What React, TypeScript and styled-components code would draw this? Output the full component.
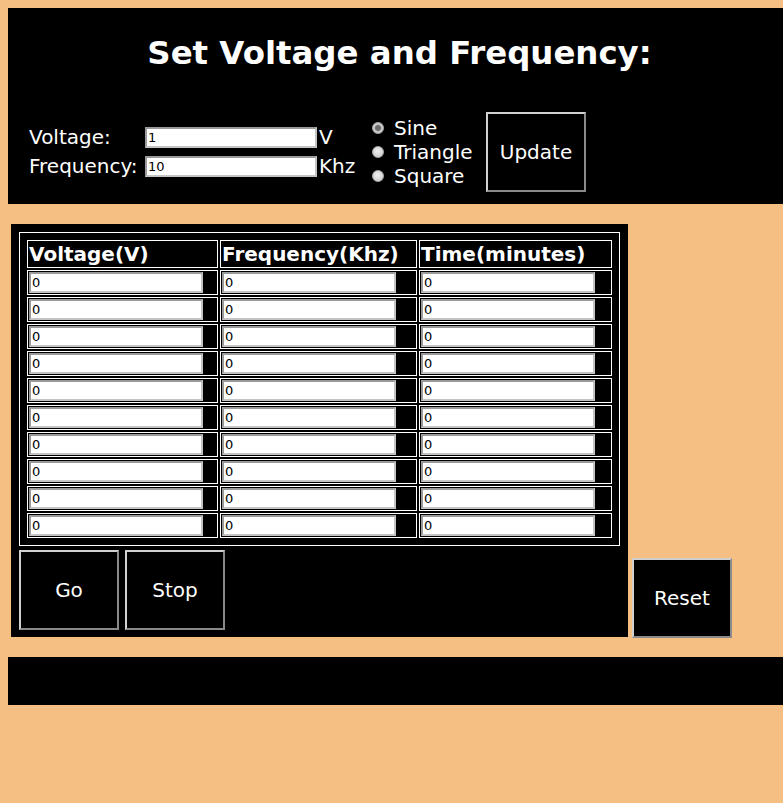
import React from "react";
import styled, { createGlobalStyle } from "styled-components";

const Global = createGlobalStyle`
  body {
    margin: 8px 0 8px 8px;
    background: #f5be82;
    font-family: "DejaVu Sans", "Liberation Sans", sans-serif;
    color: #fff;
  }
`;

const Header = styled.header`
  background: #000;
  display: flex;
  flex-direction: column;
  padding: 27px 0 12px 21px;
`;

const Title = styled.h1`
  margin: 0 -8px 40px -21px;
  font-size: 32.4px;
  line-height: 37px;
  font-weight: bold;
  text-align: center;
  white-space: nowrap;
  color: #fff;
`;

const Controls = styled.div`
  display: flex;
  align-items: center;
  height: 80px;
`;

const FieldGrid = styled.div`
  display: grid;
  grid-template-columns: 112px 172px 36px;
  grid-auto-rows: 23px;
  row-gap: 6px;
  column-gap: 4px;
  align-items: center;
  font-size: 20px;
  line-height: 23px;
  white-space: nowrap;
`;

const Unit = styled.span`
  margin-left: -2px;
`;

const TextBox = styled.input<{ $w: number }>`
  box-sizing: border-box;
  width: ${(p) => p.$w}px;
  height: 21px;
  margin: 0;
  padding: 0 1px;
  border-width: 2px;
  border-style: solid;
  border-color: #9a9a9a #c4c4c4 #c4c4c4 #9a9a9a;
  background: #fff;
  color: #000;
  font-family: "DejaVu Sans", sans-serif;
  font-size: 13px;
  outline: none;
`;

const RadioGroup = styled.div`
  display: flex;
  flex-direction: column;
  width: 104px;
  margin-left: 15px;
  font-size: 20px;
  line-height: 24px;
  white-space: nowrap;
`;

const RadioLabel = styled.label`
  display: flex;
  align-items: center;
  gap: 10px;
`;

const Radio = styled.input`
  appearance: none;
  -webkit-appearance: none;
  margin: 0;
  width: 12px;
  height: 12px;
  border-radius: 50%;
  border: 1px solid #a8a8a8;
  background: radial-gradient(circle at 45% 40%, #f0f0f0 0, #d6d6d6 60%, #bcbcbc 100%);
  &:checked {
    background: radial-gradient(circle, #6a6a6a 0 2.5px, #a0a0a0 3px, #d0d0d0 4px, #c4c4c4 100%);
  }
`;

const Button = styled.button`
  box-sizing: border-box;
  width: 100px;
  height: 80px;
  margin: 0;
  padding: 0;
  background: #000;
  color: #fff;
  font-family: "DejaVu Sans", sans-serif;
  font-size: 20px;
  border-width: 2px;
  border-style: solid;
  border-color: #d0d0d0 #8a8a8a #8a8a8a #d0d0d0;
  cursor: pointer;
`;

const UpdateButton = styled(Button)`
  margin-left: 10px;
`;

const Middle = styled.section`
  display: flex;
  align-items: flex-end;
  margin-top: 20px;
`;

const Panel = styled.div`
  background: #000;
  margin-left: 3px;
  padding: 8px 8px 7px 8px;
`;

const Table = styled.table`
  border: 1px solid #fff;
  padding: 5px;
  border-spacing: 2px;
  background: #000;
`;

const HeadCell = styled.th<{ $w: number }>`
  width: ${(p) => p.$w}px;
  border: 1px solid #fff;
  padding: 1px;
  font-size: 20px;
  line-height: 24px;
  font-weight: bold;
  text-align: left;
  color: #fff;
  white-space: nowrap;
`;

const Cell = styled.td`
  border: 1px solid #fff;
  padding: 1px;
  line-height: 0;
`;

const ButtonRow = styled.div`
  display: flex;
  gap: 6px;
  margin-top: 4px;
`;

const ResetButton = styled(Button)`
  margin-left: 4px;
  margin-bottom: -1px;
`;

const Footer = styled.footer`
  height: 48px;
  margin-top: 20px;
  background: #000;
`;

const columns = [
  { name: "Voltage(V)", w: 187 },
  { name: "Frequency(Khz)", w: 193 },
  { name: "Time(minutes)", w: 189 },
];

const rows = Array.from({ length: 10 }, (_, i) => i);

export default function App() {
  return (
    <>
      <Global />
      <Header>
        <Title>Set Voltage and Frequency:</Title>
        <Controls>
          <FieldGrid>
            <span>Voltage:</span>
            <TextBox $w={172} defaultValue="1" />
            <Unit>V</Unit>
            <span>Frequency:</span>
            <TextBox $w={172} defaultValue="10" />
            <Unit>Khz</Unit>
          </FieldGrid>
          <RadioGroup>
            <RadioLabel>
              <Radio type="radio" name="wave" defaultChecked />
              Sine
            </RadioLabel>
            <RadioLabel>
              <Radio type="radio" name="wave" />
              Triangle
            </RadioLabel>
            <RadioLabel>
              <Radio type="radio" name="wave" />
              Square
            </RadioLabel>
          </RadioGroup>
          <UpdateButton>Update</UpdateButton>
        </Controls>
      </Header>
      <Middle>
        <Panel>
          <Table>
            <thead>
              <tr>
                {columns.map((c) => (
                  <HeadCell key={c.name} $w={c.w}>
                    {c.name}
                  </HeadCell>
                ))}
              </tr>
            </thead>
            <tbody>
              {rows.map((r) => (
                <tr key={r}>
                  {columns.map((c) => (
                    <Cell key={c.name}>
                      <TextBox $w={174} defaultValue="0" />
                    </Cell>
                  ))}
                </tr>
              ))}
            </tbody>
          </Table>
          <ButtonRow>
            <Button>Go</Button>
            <Button>Stop</Button>
          </ButtonRow>
        </Panel>
        <ResetButton>Reset</ResetButton>
      </Middle>
      <Footer />
    </>
  );
}
